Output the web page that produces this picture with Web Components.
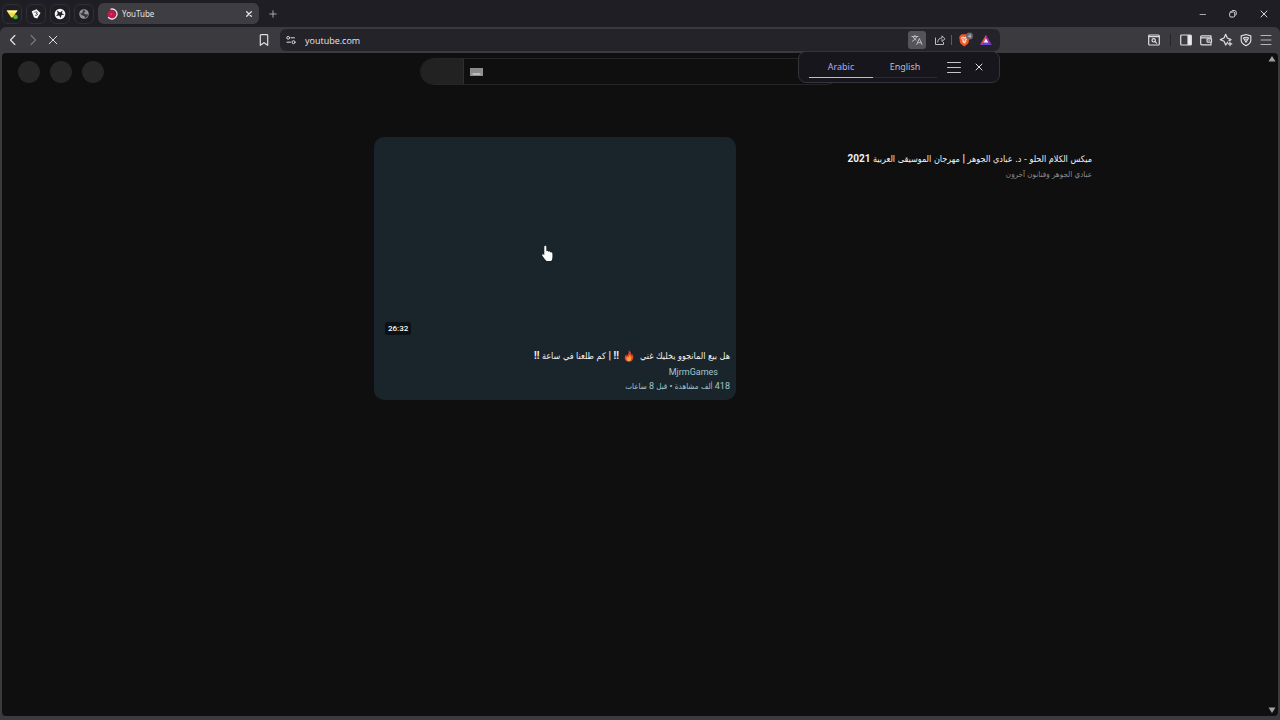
<!DOCTYPE html>
<html lang="en">
<head>
<meta charset="utf-8">
<title>YouTube</title>
<style>
  html, body { height: 100%; margin: 0; }
  body {
    background: #1f1e24;
    color: #f1f1f1;
    font-family: "Noto Sans", "Open Sans", sans-serif;
    font-size: 9px;
    overflow: hidden;
  }
  video-card b { font-family: Roboto, sans-serif; font-size: 10px; }
  video-card [slot="meta"] b { font-size: 9px; font-weight: 400; }
</style>
</head>
<body>

<browser-window>
  <tab-strip slot="tabs"></tab-strip>
  <tool-bar slot="toolbar"></tool-bar>
  <video-page slot="page">
    <video-card href="#mix">
      <span slot="title">ميكس الكلام الحلو - د. عبادي الجوهر <b>|</b> مهرجان الموسيقى العربية <b>2021</b></span>
      <span slot="meta">عبادي الجوهر وفنانون آخرون</span>
    </video-card>
    <video-card href="#video" class="hovered" duration="26:32">
      <span slot="title">هل بيع المانجوو يخليك غني <fire-emoji></fire-emoji> <b>!! |</b> كم طلعنا في ساعة <b>!!</b></span>
      <span slot="channel">MjrmGames</span>
      <span slot="meta"><b>418 </b>ألف مشاهدة<b> • </b>قبل<b> 8 </b>ساعات</span>
    </video-card>
  </video-page>
</browser-window>

<script>
const define = (name, html) => {
  const template = document.createElement('template');
  template.innerHTML = html;

  customElements.define(name, class extends HTMLElement {
    connectedCallback() {
      if (this.shadowRoot) return;
      const root = this.attachShadow({ mode: 'open' });
      root.appendChild(template.content.cloneNode(true));
      const duration = root.querySelector('.duration');
      if (duration) {
        duration.textContent = this.getAttribute('duration') || '';
        root.querySelector('a').href = this.getAttribute('href');
      }
    }
  });
};

const buttonStyle = `
  button {
    display: flex;
    align-items: center;
    justify-content: center;
    padding: 0;
    border: 0;
    background: none;
    color: inherit;
    font: inherit;
  }
  svg {
    display: block;
    fill: none;
    stroke-linecap: round;
    stroke-linejoin: round;
  }
  svg:not([stroke]) { stroke: currentColor; }
`;

define('browser-window', `
  <style>
    :host {
      display: flex;
      flex-direction: column;
      height: 100vh;
    }
    .body {
      flex: 1;
      min-height: 0;
      display: flex;
      flex-direction: column;
      background: #3b3a3f;
      border-radius: 6px 6px 0 0;
    }
    .view {
      flex: 1;
      min-height: 0;
      display: flex;
      margin: 0 2px 4px;
    }
    .view ::slotted(*) { flex: 1; }
  </style>
  <slot name="tabs"></slot>
  <div class="body">
    <slot name="toolbar"></slot>
    <div class="view"><slot name="page"></slot></div>
  </div>
`);

define('tab-strip', `
  <style>
    ${buttonStyle}
    :host {
      display: flex;
      align-items: center;
      height: 27px;
      gap: 4px;
      padding: 0 4px 0 2px;
      box-sizing: border-box;
    }
    .pinned {
      width: 20px;
      height: 20px;
      box-sizing: border-box;
      border: 1px solid #302f36;
      border-radius: 6px;
    }
    .tab {
      display: flex;
      align-items: center;
      width: 161px;
      height: 21px;
      box-sizing: border-box;
      padding: 0 5px 0 8px;
      gap: 4px;
      background: #3e3d42;
      border-radius: 6px;
      color: #e4e3e8;
      font-size: 8px;
    }
    .tab .name { flex: 1; text-align: left; }
    .add { width: 20px; height: 20px; color: #a9a8ad; }
    .controls { display: flex; margin-left: auto; color: #d8d7dc; }
    .controls button { width: 30px; height: 24px; }
    .controls button:last-child { width: 24px; margin-left: 4px; }
  </style>
  <button class="pinned" aria-label="Mail tab">
    <svg width="12" height="12" viewBox="0 0 12 12" stroke="none">
      <path d="M.5 2.500h11L7 9.200Q6 10 5 9.200z" fill="#f3df3a"/><path d="M1 2.500h10.500L10 4.500H2.500z" fill="#fff7b0"/>
      <circle cx="9.500" cy="9" r="2.300" fill="#58ad43"/>
    </svg>
  </button>
  <button class="pinned" aria-label="Pinned tab 2">
    <svg width="12" height="12" viewBox="0 0 12 12" stroke="none">
      <path d="M1.700 3.300 6.500 1.200 10.500 5 7.200 10.500 4 9.500z" fill="#f7f7f7"/>
      <path d="M4.800 4.300 6.500 3.700 7.200 4.800 6 5.600 7.700 6 6.800 7.400 5.500 7.300" stroke="#29282e" stroke-width=".7"/>
    </svg>
  </button>
  <button class="pinned" aria-label="Pinned tab 3">
    <svg width="12" height="12" viewBox="0 0 12 12" stroke="none">
      <circle cx="6" cy="6" r="5.300" fill="#f5f5f5"/>
      <path d="M3 2.500 6 4.500 8.700 2.600 7.800 5.200 10.500 6.500 7.600 7 6.600 10 5.200 7.500 2 8 3.800 5.800z" fill="#1e1d22"/>
    </svg>
  </button>
  <button class="pinned" aria-label="Pinned tab 4">
    <svg width="12" height="12" viewBox="0 0 12 12" stroke="none">
      <circle cx="6" cy="6" r="4.800" fill="#929499"/>
      <path d="M5.300 2q2 .1 2.300 1.600L5.700 5l1.800 1.300 2.700.1Q9.700 9.500 7 10l-.7-2-2.500-.8L2 5.600Q2.500 5 4 5.200z" fill="#34363b"/>
    </svg>
  </button>
  <button class="tab">
    <svg width="12" height="12" viewBox="0 0 12 12">
      <circle cx="5.500" cy="6.200" r="3.900" fill="#c5174b" stroke="none"/>
      <path d="M4.500 5v2.500L6.700 6.200z" fill="#e9446c" stroke="none"/>
      <path d="M5 1.100a5 5 0 1 1-2.500 8.500" stroke="#f6dfe6" stroke-width="1.400"/>
    </svg>
    <span class="name">YouTube</span>
    <svg width="10" height="10" viewBox="0 0 10 10" stroke-width="1.300"><path d="m2.700 2.700 4.600 4.600m0-4.600L2.700 7.300"/></svg>
  </button>
  <button class="add" aria-label="New tab">
    <svg width="10" height="10" viewBox="0 0 10 10"><path d="M5 1.800v6.400M1.800 5h6.400"/></svg>
  </button>
  <div class="controls">
    <button aria-label="Minimize"><svg width="10" height="10" viewBox="0 0 10 10"><path d="M2 5.500h5.500" stroke="#a9a8ad"/></svg></button>
    <button aria-label="Restore"><svg width="10" height="10" viewBox="0 0 10 10"><rect x="1.700" y="3" width="5" height="5" rx="1.200"/><path d="M3.600 2.100q.2-.6 1.200-.6h1.700q1.700 0 1.700 1.700V5q0 1-.5 1.300"/></svg></button>
    <button aria-label="Close"><svg width="10" height="10" viewBox="0 0 10 10"><path d="m2 2 6 6m0-6L2 8"/></svg></button>
  </div>
`);

define('tool-bar', `
  <style>
    ${buttonStyle}
    :host {
      display: grid;
      grid-template-columns: 7fr 18fr 7fr;
      align-items: center;
      height: 26px;
      color: #dedde2;
      position: relative;
      z-index: 1;
    }
    button { width: 20px; height: 20px; }
    .nav, .tools { display: flex; align-items: center; }
    .nav { padding: 0 6px 0 3px; }
    .nav .bookmark { margin-left: auto; }
    .off { color: #76757b; }
    .tools { justify-content: flex-end; padding-right: 4px; }
    .tools hr {
      width: 1px;
      height: 12px;
      margin: 0 5px 0 6px;
      border: 0;
      background: #25242a;
    }
    .address {
      display: flex;
      align-items: center;
      height: 22px;
      padding: 0 4px 0 1px;
      background: #242329;
      border-radius: 6px;
      position: relative;
    }
    input {
      flex: 1;
      min-width: 0;
      padding: 0 4px;
      border: 0;
      outline: 0;
      background: none;
      color: #e4e3e8;
      font: inherit;
      font-family: "Open Sans", "Noto Sans", sans-serif;
    }
    .address .translate {
      width: 18px;
      height: 18px;
      margin-right: 4px;
      background: #55545a;
      border-radius: 3px;
    }
    .address hr {
      width: 1px;
      height: 10px;
      margin: 0 3px 0 1px;
      border: 0;
      background: #5c5b61;
    }
    .address .brave { margin-right: 1px; }
    translate-bubble {
      position: absolute;
      top: 22px;
      right: 0;
    }
  </style>
  <div class="nav">
    <button aria-label="Back"><svg width="12" height="12" viewBox="0 0 12 12" stroke-width="1.300"><path d="M7.800 1.500 3.500 6l4.300 4.500"/></svg></button>
    <button class="off" aria-label="Forward"><svg width="12" height="12" viewBox="0 0 12 12" stroke-width="1.300"><path d="M4.200 1.500 8.500 6l-4.300 4.500"/></svg></button>
    <button aria-label="Stop"><svg width="12" height="12" viewBox="0 0 12 12"><path d="m2.200 2.200 7.600 7.600m0-7.600L2.200 9.800"/></svg></button>
    <button class="bookmark" aria-label="Bookmark"><svg width="12" height="12" viewBox="0 0 12 12" stroke-width="1.200"><path d="M2.300 1.500q0-.8.8-.8h5.800q.8 0 .8.800v9.800L6 8.700l-3.700 2.600z"/></svg></button>
  </div>
  <div class="address">
    <button aria-label="Site settings"><svg width="10" height="10" viewBox="0 0 10 10"><circle cx="2.200" cy="2.800" r="1.400"/><path d="M5 2.800h3.500M1 7.200h3.500"/><circle cx="7.500" cy="7.200" r="1.500"/></svg></button>
    <input aria-label="Address" value="youtube.com">
    <button class="translate" aria-label="Translate"><svg width="12" height="12" viewBox="0 0 12 12" stroke="#bdbcc1"><path d="M1 2.500h6M4 1.300v1.200m2 0Q5.500 5 1.500 7.200M2.300 3.200Q3.500 5.500 5 6.200M5.700 10.500 8.300 4.500l2.700 6M6.700 8.700H10"/></svg></button>
    <button aria-label="Share"><svg width="12" height="12" viewBox="0 0 12 12" stroke="#bdbcc1"><path d="M1.500 4v6.500h8V8.500M3.700 8Q4 4 8 4V1.800L11 4.800 8 7.500V5.600"/></svg></button>
    <hr>
    <button class="brave" aria-label="Shields"><svg width="16" height="16" viewBox="0 0 16 16" stroke="none">
      <path d="m3.200 3.500 1.600-1.200h5l1.600 1.200 1 1.500-.8 5.500q-.4 1.400-4.300 4-3.900-2.600-4.300-4L2.200 5z" fill="#ed5a2b"/>
      <path d="m4.300 5.300 1.500-.5 1.500.4 1.500-.4 1.500.5.300 1.200-1.500 2 .2 1.200-2 2-2-2 .2-1.200-1.500-2z" fill="#f6e3da"/>
      <path d="m5.200 6.500 1.400.5M9.400 6.500 8 7M7.300 7v2" stroke="#ed5a2b" stroke-width=".8"/>
      <circle cx="12.500" cy="4" r="3.500" fill="#66666b"/><path d="M13.200 5.800V2.300l-2 2.300h2.500" stroke="#c8c8cc" stroke-width=".7" fill="none"/>
    </svg></button>
    <button aria-label="Rewards"><svg width="14" height="12" viewBox="0 0 14 12" stroke="none">
      <path d="M7 .8 1 11l6-3.500z" fill="#ef4c4e"/><path d="M7 .8 13 11 7 7.500z" fill="#982ca5"/><path d="M1 11h12L7 7z" fill="#6344d5"/><path d="m7 4.500 2.300 4H4.700z" fill="#fff"/>
    </svg></button>
    <translate-bubble></translate-bubble>
  </div>
  <div class="tools">
    <button aria-label="Search tabs"><svg width="14" height="14" viewBox="0 0 14 14" stroke-width="1.200"><rect x="1.700" y="2" width="10.600" height="10" rx="1"/><path d="M2 3.600h10"/><circle cx="6.700" cy="7.300" r="1.700"/><path d="m8 8.600 1.600 1.500"/></svg></button>
    <hr>
    <button aria-label="Sidebar"><svg width="14" height="14" viewBox="0 0 14 14" stroke-width="1.200"><rect x="1.700" y="2" width="10.600" height="10" rx="1"/><path d="M9 2.500h3v9H9z" fill="#f0f0f3"/></svg></button>
    <button aria-label="Wallet"><svg width="14" height="14" viewBox="0 0 14 14" stroke-width="1.200"><path d="M12 5V2.800H2.700q-1 0-1 1v7q0 1 1 1H12V10M1.700 4.900H12"/><path d="M12.500 5.800H9q-1 0-1 1v1.400q0 1 1 1h3.500zM10 7.500h.2"/></svg></button>
    <button aria-label="Leo"><svg width="14" height="14" viewBox="0 0 14 14" stroke-width="1.200"><path d="M8.700 9.200 6.700 12 5 8.300 1.300 6.600 5 5l1.700-3.700L8.300 5 12 6.600l-2 1M11 9v3.600M9.200 10.800h3.600"/></svg></button>
    <button aria-label="VPN"><svg width="14" height="14" viewBox="0 0 14 14" stroke-width="1.200"><path d="m7 1.500 4.800 1.300v4.400q0 3.200-4.800 5.500-4.800-2.300-4.800-5.500V2.800z"/><path d="M4.400 5Q7 3.500 9.600 5L7 9.200zM5.500 6.400q1.500-.8 3 0"/></svg></button>
    <button aria-label="Menu"><svg width="14" height="14" viewBox="0 0 14 14" stroke="#b5b4b9"><path d="M2 2.500h10M2 7h10M2 11.500h10"/></svg></button>
  </div>
`);

define('translate-bubble', `
  <style>
    ${buttonStyle}
    :host {
      display: flex;
      align-items: center;
      width: 202px;
      height: 32px;
      box-sizing: border-box;
      padding: 0 4px 0 10px;
      background: #17161c;
      border: 1px solid #35343a;
      border-radius: 8px;
      color: #bebdcb;
    }
    .lang {
      width: 64px;
      height: 22px;
      border-bottom: 1px solid #2c2b31;
    }
    .lang.on {
      color: #b5a9f0;
      border-bottom: 1px solid #bfb1fb;
    }
    .icon { width: 25px; height: 22px; }
    .lang + .icon { margin-left: 4px; }
  </style>
  <button class="lang on">Arabic</button>
  <button class="lang">English</button>
  <button class="icon" aria-label="Options"><svg width="14" height="12" viewBox="0 0 14 12" stroke="#c4c3c9"><path d="M.5 1.500h13M.5 6.500h13M.5 11.500h13"/></svg></button>
  <button class="icon" aria-label="Close"><svg width="10" height="10" viewBox="0 0 10 10" stroke="#e0dfe4"><path d="m2 2 6 6m0-6L2 8"/></svg></button>
`);

define('video-page', `
  <style>
    ${buttonStyle}
    :host {
      display: flex;
      background: #0f0f0f;
      border-radius: 4px;
      font-family: Roboto, "DejaVu Sans Condensed", "DejaVu Sans", sans-serif;
    }
    .content { flex: 1; min-width: 0; }
    .masthead {
      display: grid;
      grid-template-columns: 1fr 420px 1fr;
      align-items: center;
      height: 37px;
      padding: 0 24px 0 16px;
    }
    .actions { display: flex; gap: 10px; }
    .actions button {
      width: 22px;
      height: 22px;
      border-radius: 50%;
      background: #272727;
    }
    .search {
      display: flex;
      align-items: center;
      height: 27px;
      box-sizing: border-box;
      border: 1px solid #262626;
      border-radius: 14px;
      overflow: hidden;
    }
    .search .go {
      width: 43px;
      height: 100%;
      background: #222;
      border-right: 1px solid #2e2e2e;
    }
    .search .keys { width: 24px; height: 100%; }
    input {
      flex: 1;
      min-width: 0;
      border: 0;
      background: none;
      color: #f1f1f1;
      outline: 0;
    }
    .grid {
      display: grid;
      grid-template-columns: repeat(3, minmax(0, 1fr));
      align-items: start;
      direction: rtl;
      padding: 47px 168px 0 10px;
    }
    .scroll {
      display: flex;
      flex-direction: column;
      justify-content: space-between;
      align-items: center;
      width: 12px;
      padding: 3px 0;
    }
    .scroll svg { fill: #a0a0a0; stroke: none; }
  </style>
  <div class="content">
    <div class="masthead">
      <div class="actions">
        <button aria-label="Account"></button>
        <button aria-label="Notifications"></button>
        <button aria-label="Create"></button>
      </div>
      <div class="search">
        <button class="go" aria-label="Search"></button>
        <button class="keys" aria-label="Keyboard"><svg width="13" height="8" viewBox="0 0 13 8" stroke="none"><path d="M0 0h13v8H0z" fill="#909090"/><path d="M1.500 2h10M1.500 4h10" stroke="#777" stroke-dasharray="1 1" stroke-linecap="butt"/><path d="M3 6h7" stroke="#e2e2e2"/></svg></button>
        <input aria-label="Search query">
      </div>
    </div>
    <div class="grid"><slot></slot></div>
  </div>
  <div class="scroll">
    <svg width="8" height="6" viewBox="0 0 8 6"><path d="M4 0 7.500 5.500H.5z"/></svg>
    <svg width="8" height="6" viewBox="0 0 8 6"><path d="M.5.500h7L4 6z"/></svg>
  </div>
`);

define('video-card', `
  <style>
    :host {
      display: block;
      padding: 6px;
      border-radius: 10px;
    }
    :host(.hovered) {
      background: #19252b;
      --meta: #a3c5d0;
      position: relative;
    }
    a { display: block; color: inherit; text-decoration: none; }
    .thumb { display: none; }
    :host([duration]) .thumb {
      display: flex;
      align-items: flex-end;
      justify-content: flex-end;
      aspect-ratio: 16 / 9;
      box-sizing: border-box;
      padding: 5px;
    }
    .duration {
      padding: 0 3px;
      background: #0b1115;
      border-radius: 3px;
      font-size: 8px;
      font-weight: 500;
      line-height: 13px;
      color: #fff;
    }
    .text {
      display: block;
      padding-top: 8px;
      font-family: "DejaVu Sans Condensed", "DejaVu Sans", sans-serif;
    }
    .title, .channel, .meta { display: block; white-space: nowrap; }
    .title { height: 16px; font-size: 9px; line-height: 16px; }
    .channel {
      height: 15px;
      padding-inline-start: 12px;
      font-family: Roboto, sans-serif;
      font-size: 9px;
      line-height: 16px;
      color: var(--meta);
    }
    .meta { height: 15px; font-size: 8px; line-height: 15px; color: var(--meta, #8c8c8c); }
    :host(:not([duration])) .channel { display: none; }
    .pointer { display: none; }
    :host(.hovered) .pointer {
      display: block;
      position: absolute;
      left: 167px;
      top: 108px;
    }
  </style>
  <a>
    <span class="thumb"><span class="duration"></span></span>
    <span class="text">
      <span class="title"><slot name="title"></slot></span>
      <span class="channel"><slot name="channel"></slot></span>
      <span class="meta"><slot name="meta"></slot></span>
    </span>
  </a>
  <svg class="pointer" width="14" height="18" viewBox="0 0 14 18" aria-hidden="true">
    <path d="M3.300 1.800q0-1.100 1-1.100t1 1.100v4.800q.3-1 1.200-.7.700.2.800 1 .5-.8 1.300-.5.700.3.700 1.100.7-.6 1.400-.1.700.4.700 1.300v3.500q0 2.600-1.500 3.900H5.600Q4.200 15 1.600 11q-.7-1.300 0-1.700.7-.3 1.700 1z" fill="#fff"/>
  </svg>
`);

define('fire-emoji', `
  <style>
    :host { display: inline-block; margin: 0 3px; vertical-align: -3px; }
    svg { display: block; }
  </style>
  <svg width="10" height="12" viewBox="0 0 10 12" role="img" aria-label="fire">
    <path d="M4.500.3Q7.500 2 7 5q.8-.5.800-1.500Q9.600 5.500 9.300 8 8.800 11.700 5 11.700T.7 8.300Q.5 6 2.200 4.200q0 1 .7 1.500Q5.500 3.300 4.500.3z" fill="#df442b"/>
    <path d="M5.300 4.500q2.500 2.200 2 4.200-.4 2.500-2.400 2.500-2.300 0-2.500-2.300-.1-1.500 1-2.400.3 1 .9 1Q5.700 6.500 5.300 4.500z" fill="#f6a13c"/>
  </svg>
`);
</script>
</body>
</html>
